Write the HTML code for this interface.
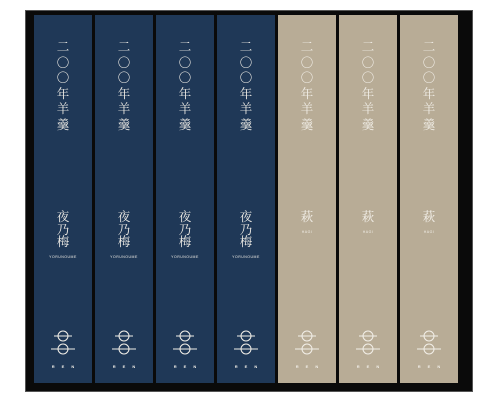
<!DOCTYPE html><html><head><meta charset="utf-8"><style>
body{margin:0;width:500px;height:400px;background:#fff;position:relative;overflow:hidden;font-family:"Liberation Serif","Noto Serif CJK SC",serif}
.box{position:absolute;left:25px;top:10px;width:448px;height:382px;background:#0a0a0a;border:1px solid #555;box-sizing:border-box}
.bar{position:absolute;top:15px;width:58px;height:368px;color:#f2efe8;text-align:center}
.n{background:#1f3857}.b{background:#b8ac96}
.t{position:absolute;top:25px;left:0;width:100%;font-size:12.5px;line-height:15.5px}
.m{position:absolute;top:196px;left:0;width:100%;font-size:12.5px;line-height:12.5px}
.s{font-family:"Liberation Sans",sans-serif;font-size:3.5px;letter-spacing:.5px;margin-top:6px;line-height:4px}
.lg{position:absolute;left:17px;top:314px}
.r{position:absolute;top:349px;left:0;width:100%;font-family:"Liberation Sans",sans-serif;font-size:4px;letter-spacing:7px;text-indent:7px;font-weight:bold}
</style></head><body><div class="box"></div>
<div class="bar n" style="left:34px"><div class="t">二<br>〇<br>〇<br>年<br>羊<br>羹</div><div class="m">夜<br>乃<br>梅<div class="s">YORUNOUME</div></div><svg class="lg" width="24" height="30" viewBox="0 0 24 30" fill="none" stroke="#f2efe8" stroke-width="1"><circle cx="12" cy="7" r="5"/><circle cx="12" cy="20" r="5"/><path d="M3 7H21M0 20H24"/></svg><div class="r">REN</div></div>
<div class="bar n" style="left:95px"><div class="t">二<br>〇<br>〇<br>年<br>羊<br>羹</div><div class="m">夜<br>乃<br>梅<div class="s">YORUNOUME</div></div><svg class="lg" width="24" height="30" viewBox="0 0 24 30" fill="none" stroke="#f2efe8" stroke-width="1"><circle cx="12" cy="7" r="5"/><circle cx="12" cy="20" r="5"/><path d="M3 7H21M0 20H24"/></svg><div class="r">REN</div></div>
<div class="bar n" style="left:156px"><div class="t">二<br>〇<br>〇<br>年<br>羊<br>羹</div><div class="m">夜<br>乃<br>梅<div class="s">YORUNOUME</div></div><svg class="lg" width="24" height="30" viewBox="0 0 24 30" fill="none" stroke="#f2efe8" stroke-width="1"><circle cx="12" cy="7" r="5"/><circle cx="12" cy="20" r="5"/><path d="M3 7H21M0 20H24"/></svg><div class="r">REN</div></div>
<div class="bar n" style="left:217px"><div class="t">二<br>〇<br>〇<br>年<br>羊<br>羹</div><div class="m">夜<br>乃<br>梅<div class="s">YORUNOUME</div></div><svg class="lg" width="24" height="30" viewBox="0 0 24 30" fill="none" stroke="#f2efe8" stroke-width="1"><circle cx="12" cy="7" r="5"/><circle cx="12" cy="20" r="5"/><path d="M3 7H21M0 20H24"/></svg><div class="r">REN</div></div>
<div class="bar b" style="left:278px"><div class="t">二<br>〇<br>〇<br>年<br>羊<br>羹</div><div class="m">萩<div class="s">HAGI</div></div><svg class="lg" width="24" height="30" viewBox="0 0 24 30" fill="none" stroke="#f2efe8" stroke-width="1"><circle cx="12" cy="7" r="5"/><circle cx="12" cy="20" r="5"/><path d="M3 7H21M0 20H24"/></svg><div class="r">REN</div></div>
<div class="bar b" style="left:339px"><div class="t">二<br>〇<br>〇<br>年<br>羊<br>羹</div><div class="m">萩<div class="s">HAGI</div></div><svg class="lg" width="24" height="30" viewBox="0 0 24 30" fill="none" stroke="#f2efe8" stroke-width="1"><circle cx="12" cy="7" r="5"/><circle cx="12" cy="20" r="5"/><path d="M3 7H21M0 20H24"/></svg><div class="r">REN</div></div>
<div class="bar b" style="left:400px"><div class="t">二<br>〇<br>〇<br>年<br>羊<br>羹</div><div class="m">萩<div class="s">HAGI</div></div><svg class="lg" width="24" height="30" viewBox="0 0 24 30" fill="none" stroke="#f2efe8" stroke-width="1"><circle cx="12" cy="7" r="5"/><circle cx="12" cy="20" r="5"/><path d="M3 7H21M0 20H24"/></svg><div class="r">REN</div></div>
</body></html>
